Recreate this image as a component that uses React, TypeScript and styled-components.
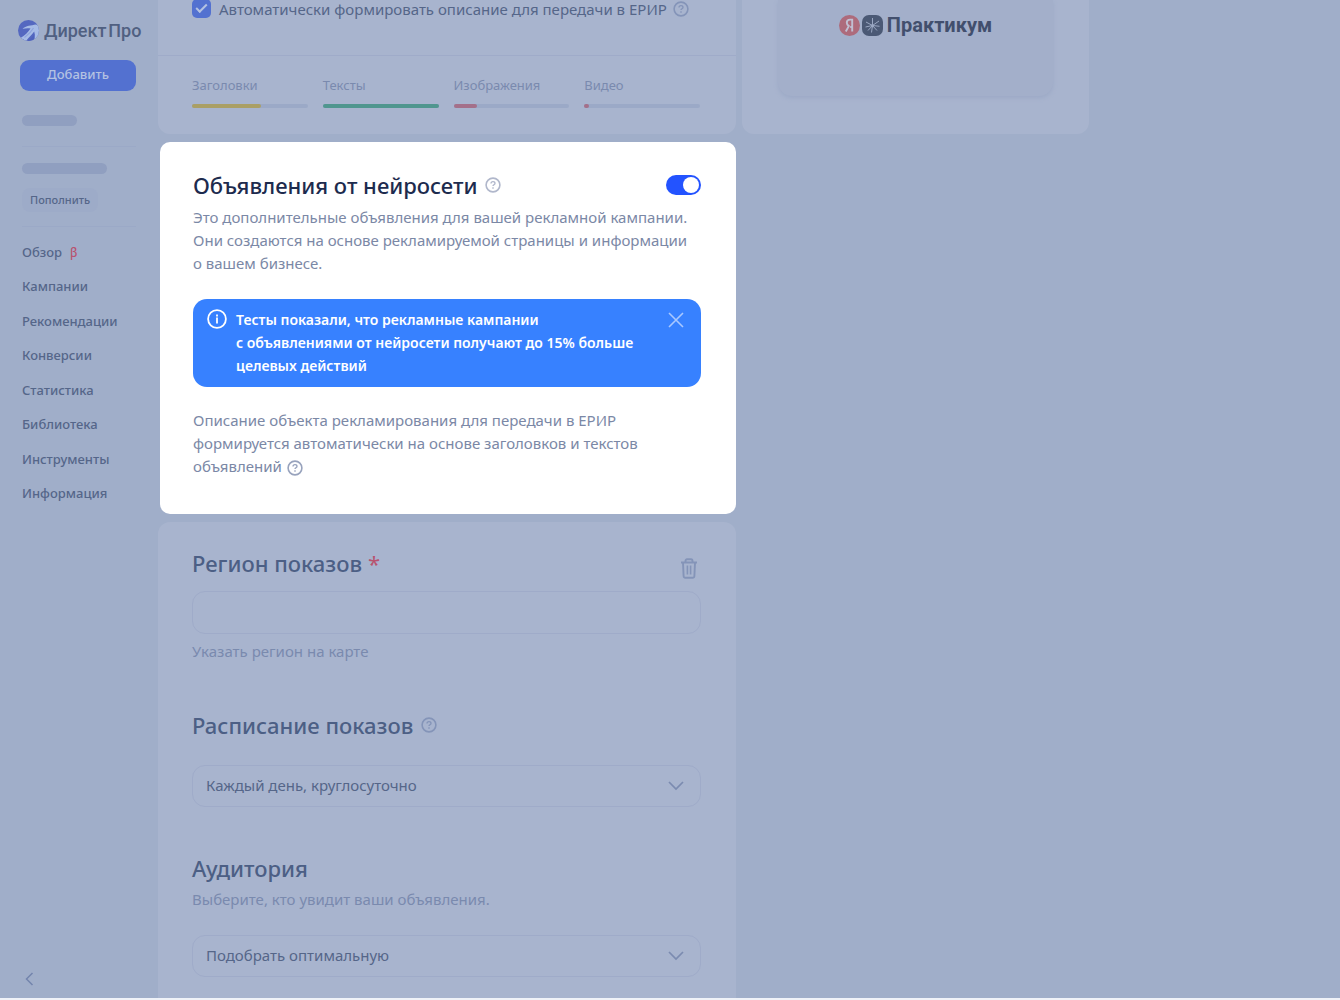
import React from 'react';
import styled, { createGlobalStyle } from 'styled-components';

const c = {
  page: '#a0aec9',
  card: '#a8b4ce',
  line: '#9fabc9',
  skeleton: '#909fc0',
  text: '#556689',
  heading: '#4c5f85',
  muted: '#7a8aae',
  icon: '#8494b8',
  accent: '#5371d0',
  red: '#b8536f',
};

const GlobalStyle = createGlobalStyle`
  *, *::before, *::after { box-sizing: border-box; }
  body {
    margin: 0;
    background: ${c.page};
    font-family: "Noto Sans", "Open Sans", "Liberation Sans", sans-serif;
    font-size: 15px;
    line-height: 23px;
    color: ${c.text};
  }
  button, input, select { font: inherit; color: inherit; margin: 0; }
  h2, p { margin: 0; }
  svg { display: block; flex: none; }
`;

const Shell = styled.div`
  display: flex;
  height: 100vh;
  overflow: hidden;
  border-bottom: 2px solid #eff2f8;
`;

const Sidebar = styled.aside`
  flex: none;
  width: 158px;
  padding: 17px 22px 12px;
  display: flex;
  flex-direction: column;
  align-items: flex-start;
`;

const Logo = styled.a`
  display: flex;
  align-items: center;
  gap: 5px;
  height: 26px;
  margin: 0 -4px;
  color: #506081;
  font-family: Roboto, "Noto Sans", sans-serif;
  font-size: 18px;
  font-weight: 500;
  white-space: nowrap;
  text-decoration: none;
`;

const AddButton = styled.button`
  align-self: stretch;
  height: 31px;
  margin: 17px 0 24px -2px;
  padding: 0 0 2px;
  border: 0;
  border-radius: 9px;
  background: ${c.accent};
  color: #b4c2e2;
  font-size: 13px;
  font-weight: 500;
`;

const Skeleton = styled.div<{ $w: number }>`
  width: ${(p) => p.$w}px;
  height: 11px;
  border-radius: 6px;
  background: ${c.skeleton};
`;

const Rule = styled.hr<{ $top: number; $bottom: number }>`
  align-self: stretch;
  height: 1px;
  margin: ${(p) => p.$top}px 0 ${(p) => p.$bottom}px;
  border: 0;
  background: #9ba9c7;
`;

const TopUp = styled.button`
  height: 24px;
  margin-top: 14px;
  padding: 0 8px 2px;
  border: 0;
  border-radius: 8px;
  background: #9dabc8;
  font-size: 11px;
  font-weight: 500;
`;

const Nav = styled.nav`
  display: flex;
  flex-direction: column;
  justify-content: space-between;
  height: 275px;
`;

const NavLink = styled.a`
  color: ${c.text};
  font-size: 13px;
  font-weight: 500;
  line-height: 34px;
  text-decoration: none;
`;

const Beta = styled.sup`
  margin-left: 8px;
  color: ${c.red};
  font-size: 12px;
  line-height: 12px;
  vertical-align: baseline;
`;

const Collapse = styled.button`
  display: flex;
  margin-top: auto;
  padding: 0;
  border: 0;
  background: none;
  color: #7384ad;
`;

const Content = styled.main`
  flex: 0 1 578px;
  min-width: 0;
  display: flex;
  flex-direction: column;
  gap: 8px;
`;

const Summary = styled.section`
  border-radius: 0 0 12px 12px;
  background: ${c.card};
`;

const CheckRow = styled.div`
  display: flex;
  align-items: center;
  height: 56px;
  padding: 0 34px 38px;
  border-bottom: 1px solid ${c.line};
  line-height: 18px;
  white-space: nowrap;

  svg { margin-left: 6px; color: ${c.icon}; }
`;

const Checkbox = styled.input`
  appearance: none;
  flex: none;
  display: grid;
  place-items: center;
  width: 19px;
  height: 19px;
  margin-right: 8px;
  border-radius: 5px;
  background: ${c.accent};

  &:checked::before {
    content: "";
    width: 11px;
    height: 6px;
    margin-bottom: 3px;
    border: solid #b4c2e2;
    border-width: 0 0 2px 2px;
    transform: rotate(-45deg);
  }
`;

const Meters = styled.div`
  display: grid;
  grid-template-columns: repeat(4, 1fr);
  gap: 15px;
  padding: 18px 36px 26px 34px;
`;

const MeterName = styled.div`
  margin-bottom: 7px;
  color: ${c.muted};
  font-size: 13px;
`;

const Track = styled.div`
  height: 4px;
  border-radius: 2px;
  background: #9ba9c7;
`;

const Fill = styled.div<{ $color: string }>`
  height: 4px;
  border-radius: 2px;
  background: ${(p) => p.$color};
`;

const AiCard = styled.section`
  margin-left: 2px;
  padding: 27px 35px 36px 33px;
  border-radius: 10px;
  background: #fff;
  color: #7b88a6;
`;

const HeadRow = styled.div<{ $spread?: boolean; $gap?: number }>`
  display: flex;
  align-items: center;
  justify-content: ${(p) => (p.$spread ? 'space-between' : 'flex-start')};
  min-height: 32px;
  margin-bottom: ${(p) => p.$gap ?? 4}px;
`;

const Heading = styled.h2<{ $dark?: boolean }>`
  display: flex;
  align-items: center;
  gap: 8px;
  color: ${(p) => (p.$dark ? '#1d2b4e' : c.heading)};
  font-size: 22px;
  font-weight: 500;
  line-height: 32px;

  svg { color: ${(p) => (p.$dark ? '#b0b7cb' : c.icon)}; }
`;

const Required = styled.span`
  margin-left: -2px;
  color: ${c.red};
  font-weight: 400;
`;

const Switch = styled.input`
  appearance: none;
  display: flex;
  align-items: center;
  justify-content: flex-end;
  width: 35px;
  height: 20px;
  padding: 0 2px;
  border-radius: 10px;
  background: #2353ff;

  &::before {
    content: "";
    width: 16px;
    height: 16px;
    border-radius: 50%;
    background: #fff;
  }
`;

const Notice = styled.div`
  display: flex;
  align-items: flex-start;
  gap: 9px;
  margin: 24px 0 22px;
  padding: 9px 17px 10px 14px;
  border-radius: 14px;
  background: #3781ff;
  color: #fff;
  font-size: 14px;
  font-weight: 600;

  p { flex: 1; }
  > svg { margin-top: 1px; }
`;

const Close = styled.button`
  display: flex;
  margin-top: 4px;
  padding: 0;
  border: 0;
  background: none;
  color: #a9c8ff;
`;

const Note = styled.p`
  svg {
    display: inline-block;
    margin-left: 1px;
    vertical-align: -4px;
    color: #98a3bd;
  }
`;

const Settings = styled.section`
  flex: 1;
  padding: 25px 35px 20px 34px;
  border-radius: 12px 12px 0 0;
  background: ${c.card};
`;

const IconButton = styled.button`
  display: flex;
  align-self: flex-end;
  padding: 0 4px 0 0;
  border: 0;
  background: none;
  color: ${c.icon};
`;

const TextField = styled.input`
  display: block;
  width: 100%;
  height: 43px;
  margin-top: 12px;
  padding: 0 13px;
  border: 1px solid ${c.line};
  border-radius: 13px;
  background: transparent;
`;

const MapLink = styled.a`
  display: block;
  margin: 6px 0 46px;
  color: ${c.muted};
  text-decoration: none;
`;

const Hint = styled.p`
  color: ${c.muted};
`;

const SelectBox = styled.div<{ $after?: number }>`
  position: relative;
  margin: 24px 0 ${(p) => p.$after ?? 0}px;

  svg {
    position: absolute;
    top: 16px;
    right: 17px;
    color: #7b8bb0;
    pointer-events: none;
  }
`;

const Select = styled.select`
  appearance: none;
  display: block;
  width: 100%;
  height: 42px;
  padding: 0 40px 2px 13px;
  border: 1px solid ${c.line};
  border-radius: 13px;
  background: transparent;
`;

const Preview = styled.aside`
  flex: 0 1 347px;
  align-self: flex-start;
  margin-left: 6px;
  padding: 0 36px 38px;
  border-radius: 0 0 12px 12px;
  background: ${c.card};
`;

const Brand = styled.div`
  display: flex;
  justify-content: center;
  height: 96px;
  padding-top: 11px;
  border-radius: 0 0 14px 14px;
  background: #a3afca;
  box-shadow: 0 2px 4px #9ca9c6;
`;

const BrandLine = styled.div`
  display: flex;
  align-items: center;
  gap: 2px;
  height: 28px;
  color: #424f6d;
  font-family: Roboto, "Noto Sans", sans-serif;
  font-size: 20px;
  font-weight: 700;

  span { margin-left: 2px; }
`;

const Help = () => (
  <svg width="16" height="16" viewBox="0 0 16 16" fill="none" stroke="currentColor" aria-hidden="true">
    <circle cx="8" cy="8" r="6.9" strokeWidth="1.6" />
    <path d="M6 6.6c0-1.2.9-1.9 2-1.9s2 .7 2 1.7c0 1.3-2 1.4-2 2.6" strokeWidth="1.3" />
    <path d="M8 10.3v1.4" strokeWidth="1.4" />
  </svg>
);

const Chevron = () => (
  <svg width="16" height="10" viewBox="0 0 16 10" fill="none" stroke="currentColor" strokeWidth="1.7" aria-hidden="true">
    <path d="M1 1l7 7 7-7" />
  </svg>
);

const meters = [
  { name: 'Заголовки', value: 60, color: '#aa9f65' },
  { name: 'Тексты', value: 100, color: '#50968f' },
  { name: 'Изображения', value: 20, color: '#a4708a' },
  { name: 'Видео', value: 4, color: '#a4708a' },
];

const links = ['Кампании', 'Рекомендации', 'Конверсии', 'Статистика', 'Библиотека', 'Инструменты', 'Информация'];

export default function App() {
  return (
    <>
      <GlobalStyle />
      <Shell>
        <Sidebar>
          <Logo href="#">
            <svg width="21" height="21" viewBox="0 0 21 21" aria-hidden="true">
              <defs>
                <clipPath id="disc"><circle cx="10.5" cy="10.5" r="10.5" /></clipPath>
              </defs>
              <g clipPath="url(#disc)">
                <rect width="21" height="21" fill="#5468c0" />
                <path d="M4.500 9C8 5.500 13 5.500 18 4.500L21 6v10l-4.500 4c.5-3.500.3-6.500-.3-8.500C14 14.500 11 17 8 21L2.500 18c4-2.500 8-6 10-9.500C10 8 7 8.300 4.500 9z" fill="#a6bbe6" />
                <path d="M15.500 8c-2 3.500-5 6.500-9 9.500" fill="none" stroke="#8ea4dc" strokeWidth="1.200" />
                <path d="M9 21c3.500-2 6-4.500 7.500-7.500L15.500 21z" fill="#4f62bc" />
              </g>
            </svg>
            Директ&#8202;Про
          </Logo>
          <AddButton type="button">Добавить</AddButton>
          <Skeleton $w={55} />
          <Rule $top={20} $bottom={16} />
          <Skeleton $w={85} />
          <TopUp type="button">Пополнить</TopUp>
          <Rule $top={14} $bottom={8} />
          <Nav>
            <NavLink href="#">Обзор<Beta>β</Beta></NavLink>
            {links.map((l) => <NavLink href="#" key={l}>{l}</NavLink>)}
          </Nav>
          <Collapse type="button" aria-label="Свернуть меню">
            <svg width="14" height="14" viewBox="0 0 14 14" fill="none" stroke="currentColor" strokeWidth="1.500">
              <path d="M10.500 1L4.500 7l6 6" />
            </svg>
          </Collapse>
        </Sidebar>

        <Content>
          <Summary>
            <CheckRow>
              <Checkbox type="checkbox" id="erir" defaultChecked />
              <label htmlFor="erir">Автоматически формировать описание для передачи в ЕРИР</label>
              <Help />
            </CheckRow>
            <Meters>
              {meters.map((m) => (
                <div key={m.name}>
                  <MeterName>{m.name}</MeterName>
                  <Track><Fill $color={m.color} style={{ width: `${m.value}%` }} /></Track>
                </div>
              ))}
            </Meters>
          </Summary>

          <AiCard>
            <HeadRow $spread $gap={5}>
              <Heading $dark>Объявления от нейросети <Help /></Heading>
              <Switch type="checkbox" role="switch" aria-label="Объявления от нейросети" defaultChecked />
            </HeadRow>
            <p>
              Это дополнительные объявления для вашей рекламной кампании.<br />
              Они создаются на основе рекламируемой страницы и информации<br />
              о вашем бизнесе.
            </p>
            <Notice>
              <svg width="20" height="20" viewBox="0 0 20 20" fill="none" stroke="currentColor" aria-hidden="true">
                <circle cx="10" cy="10" r="8.900" strokeWidth="1.800" />
                <path d="M10 8.500v6M10 5.500v1.900" strokeWidth="1.800" />
              </svg>
              <p>
                Тесты показали, что рекламные кампании<br />
                с объявлениями от нейросети получают до 15% больше<br />
                целевых действий
              </p>
              <Close type="button" aria-label="Закрыть">
                <svg width="16" height="16" viewBox="0 0 16 16" fill="none" stroke="currentColor" strokeWidth="1.600">
                  <path d="M1 1l14 14M15 1L1 15" />
                </svg>
              </Close>
            </Notice>
            <Note>
              Описание объекта рекламирования для передачи в ЕРИР<br />
              формируется автоматически на основе заголовков и текстов<br />
              объявлений <Help />
            </Note>
          </AiCard>

          <Settings>
            <HeadRow $spread $gap={0}>
              <Heading>Регион показов <Required>*</Required></Heading>
              <IconButton type="button" aria-label="Удалить">
                <svg width="16" height="21" viewBox="0 0 16 21" fill="none" stroke="currentColor" strokeWidth="1.900">
                  <path d="M0 4.500h16M4.500 4.500V3c0-1 .6-1.700 1.500-1.700h4c.9 0 1.500.7 1.500 1.700v1.500M2 4.500l.6 13.500c.1 1.200.7 1.800 1.800 1.800h7.200c1.100 0 1.700-.6 1.800-1.800L14 4.500" />
                  <path d="M6.400 7.500v9M9.600 7.500v9" strokeWidth="1.600" />
                </svg>
              </IconButton>
            </HeadRow>
            <TextField type="text" aria-label="Регион показов" />
            <MapLink href="#">Указать регион на карте</MapLink>

            <Heading>Расписание показов <Help /></Heading>
            <SelectBox $after={45}>
              <Select aria-label="Расписание показов">
                <option>Каждый день, круглосуточно</option>
              </Select>
              <Chevron />
            </SelectBox>

            <HeadRow><Heading>Аудитория</Heading></HeadRow>
            <Hint>Выберите, кто увидит ваши объявления.</Hint>
            <SelectBox>
              <Select aria-label="Аудитория">
                <option>Подобрать оптимальную</option>
              </Select>
              <Chevron />
            </SelectBox>
          </Settings>
        </Content>

        <Preview>
          <Brand>
            <BrandLine>
              <svg width="21" height="21" viewBox="0 0 21 21" aria-hidden="true">
                <circle cx="10.500" cy="10.500" r="10.500" fill="#ad6b7c" />
                <path d="M13.200 16.500V4.600h-2c-2.200 0-3.400 1.300-3.400 3.200 0 1.500.7 2.400 2 3.300l-3 5.400M13.200 12h-2" fill="none" stroke="#c0bfd2" strokeWidth="1.900" />
              </svg>
              <svg width="21" height="21" viewBox="0 0 21 21" aria-hidden="true">
                <rect width="21" height="21" rx="7" fill="#4b5975" />
                <path d="M10.500 3v7.500M10.500 10.500L17 6M10.500 10.500L4 7M10.500 10.500l-7 1.500M10.500 10.500l-4.500 5M10.500 10.500l-1 7M10.500 10.500l4.500 5M10.500 10.500l7 .8" stroke="#9aa7c2" strokeWidth="1" />
                <circle cx="10.500" cy="10.800" r="1.600" fill="#9aa7c2" />
              </svg>
              <span>Практикум</span>
            </BrandLine>
          </Brand>
        </Preview>
      </Shell>
    </>
  );
}
